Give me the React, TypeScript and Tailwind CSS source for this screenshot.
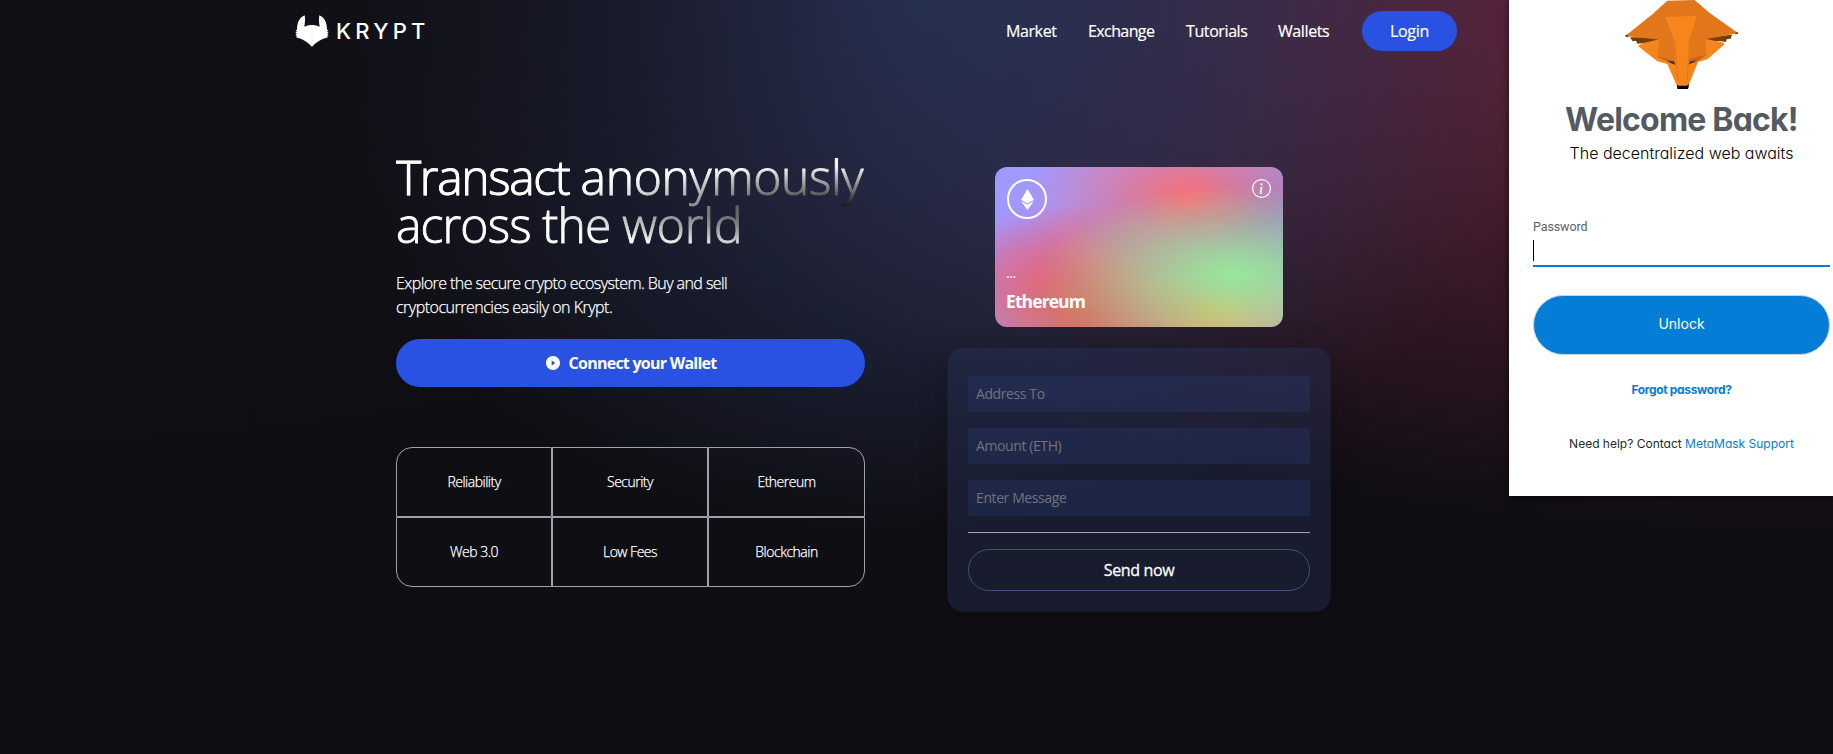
import React from "react";
import { AiFillPlayCircle } from "react-icons/ai";
import { SiEthereum } from "react-icons/si";
import { BsInfoCircle } from "react-icons/bs";

const navItems = [
  { label: "Market", style: "w-[50px] tracking-[-0.4px]" },
  { label: "Exchange", style: "w-[66px] tracking-[-0.6px]" },
  { label: "Tutorials", style: "w-[60px] tracking-[-0.4px]" },
  { label: "Wallets", style: "w-[51px] tracking-[-0.4px]" },
];

const features = [
  { label: "Reliability", corner: "rounded-tl-2xl" },
  { label: "Security", corner: "" },
  { label: "Ethereum", corner: "rounded-tr-2xl" },
  { label: "Web 3.0", corner: "rounded-bl-2xl" },
  { label: "Low Fees", corner: "" },
  { label: "Blockchain", corner: "rounded-br-2xl" },
];

const fields = ["Address To", "Amount (ETH)", "Enter Message"];

function Logo() {
  return (
    <div className="flex items-center">
      <svg width="34" height="32" viewBox="0 0 102 96" fill="#fff">
        <path d="M29 1C14 7 6 22 6 44L1 46L6 49L1 53L6 56L1 60L6 63L3 67C22 72 40 82 51 96C62 82 80 72 99 67L96 63L101 60L96 56L101 53L96 49L101 46L96 44C96 22 88 7 73 1C71 12 72 24 74 35C60 28 42 28 28 35C30 24 31 12 29 1Z" />
        <path d="M51 42V92" stroke="#d8d8de" strokeWidth="1" />
      </svg>
      <span className="ml-[7px] font-['Inter'] text-[22px] leading-8 font-medium tracking-[4.2px] text-white">KRYPT</span>
    </div>
  );
}

function Navbar() {
  return (
    <nav className="flex h-[62px] items-center justify-between pr-[376px] pl-[295px]">
      <Logo />
      <ul className="flex items-center text-base whitespace-nowrap text-white [-webkit-text-stroke:0.2px_white]">
        {navItems.map((n) => (
          <li key={n.label} className={`mr-8 ${n.style}`}>
            <span className="-ml-px">{n.label}</span>
          </li>
        ))}
        <li className="flex h-10 w-[95px] items-center justify-center rounded-full bg-[#2952e3] tracking-[-0.3px]">Login</li>
      </ul>
    </nav>
  );
}

function EthCard() {
  return (
    <div className="flex h-40 w-72 flex-col justify-between rounded-xl bg-[#a099ff] bg-[radial-gradient(at_83%_67%,rgb(152,231,156)_0,transparent_58%),radial-gradient(at_67%_20%,hsla(357,94%,71%,1)_0,transparent_59%),radial-gradient(at_88%_35%,hsla(222,81%,65%,1)_0,transparent_50%),radial-gradient(at_31%_91%,hsla(9,61%,61%,1)_0,transparent_52%),radial-gradient(at_27%_71%,hsla(336,91%,65%,1)_0,transparent_49%),radial-gradient(at_74%_89%,hsla(30,98%,65%,1)_0,transparent_51%),radial-gradient(at_53%_75%,hsla(174,94%,68%,1)_0,transparent_45%)] p-3 text-white">
      <div className="flex items-start justify-between">
        <div className="flex h-10 w-10 items-center justify-center rounded-full border-2 border-white">
          <SiEthereum size={21} />
        </div>
        <BsInfoCircle size={19} />
      </div>
      <div className="-ml-px">
        <p className="text-sm tracking-[-0.4px]">...</p>
        <p className="mt-1 text-[17.5px] leading-7 font-bold tracking-[-0.9px]">Ethereum</p>
      </div>
    </div>
  );
}

function TransferForm() {
  return (
    <div className="mt-5 flex w-full flex-col rounded-2xl border border-black/15 bg-[#273359]/40 p-5 shadow-[0_4px_30px_rgba(0,0,0,0.2)]">
      {fields.map((f) => (
        <input
          key={f}
          placeholder={f}
          className="my-2 h-9 w-full rounded-xs bg-[#2b3a76]/30 px-2 pt-[7px] pb-[9px] text-sm tracking-[-0.4px] text-white outline-none placeholder:text-[#70737f]"
        />
      ))}
      <div className="my-2 h-px bg-[#9ca3af]" />
      <button className="mt-2 h-[42px] rounded-full border border-[#3d4f7c] text-base tracking-[-0.35px] text-white [-webkit-text-stroke:0.3px_white]">Send now</button>
    </div>
  );
}

function Hero() {
  return (
    <main className="flex items-start gap-[82px] pt-[85px] pl-[396px]">
      <section className="w-[469px]">
        <h1 className="bg-white bg-[radial-gradient(at_4%_36%,#fff_0,transparent_53%),radial-gradient(at_100%_60%,#000_0,transparent_50%)] bg-clip-text pt-[6px] pb-[2px] text-[48px] leading-[48px] font-light whitespace-nowrap text-transparent [-webkit-text-stroke:0.9px_transparent]">
          <span className="tracking-[-1.35px]">Transact </span>
          <span className="tracking-[-0.35px]">anonymously</span>
          <br />
          <span className="tracking-[-0.85px]">across the </span>
          <span className="tracking-[-0.1px]">world</span>
        </h1>
        <p className="mt-5 text-base leading-6 font-light whitespace-nowrap text-white [-webkit-text-stroke:0.25px_white]">
          <span className="tracking-[-0.56px]">Explore the secure crypto ecosystem. Buy and sell</span>
          <br />
          <span className="tracking-[-0.5px]">cryptocurrencies easily on Krypt.</span>
        </p>
        <button className="mt-5 flex h-12 w-full items-center justify-center rounded-full bg-[#2952e3] text-base font-bold text-white">
          <AiFillPlayCircle size={16} className="mr-2" />
          <span className="tracking-[-0.75px]">Connect your Wallet</span>
        </button>
        <div className="mt-[60px] grid grid-cols-[156px_156px_157px]">
          {features.map((f) => (
            <div
              key={f.label}
              className={`flex h-[70px] items-center justify-center border border-[#9ca3af] text-sm font-light tracking-[-0.5px] text-white [-webkit-text-stroke:0.25px_white] ${f.corner}`}
            >
              {f.label}
            </div>
          ))}
        </div>
      </section>
      <section className="mt-5 flex w-[384px] flex-col items-center">
        <EthCard />
        <TransferForm />
      </section>
    </main>
  );
}

function Fox() {
  return (
    <svg width="160" height="100" viewBox="0 0 480 300" className="mr-[3px] block">
      <path d="M90 112L98 124L108 122L112 131L128 130L180 124L170 112ZM396 104L392 116L380 118L378 126L364 124L300 122L330 110Z" fill="#763e00" />
      <path d="M114 138L128 130L178 118L246 112L316 116L372 128L372 134L322 178L294 186L266 256L230 256L202 192L172 184Z" fill="#f6851b" />
      <path d="M178 118L226 122L226 182L172 168ZM316 116L268 122L268 180L320 164Z" fill="#e2761b" />
      <path d="M170 168L226 182L228 194L200 184ZM320 164L268 178L266 194L292 184Z" fill="#cd6116" />
      <path d="M202 184L220 184L226 195ZM290 182L272 184L266 193Z" fill="#233447" />
      <path d="M202 2L284 0L328 38L414 99L372 108L300 120L246 122L180 119L76 108L158 42Z" fill="#e2761b" />
      <path d="M76 105L84 105L86 111L76 110ZM406 98L414 97L414 102L406 103Z" fill="#763e00" />
      <path d="M197 51L291 47L268 118L266 258L231 258L222 122Z" fill="#f6851b" />
      <path d="M224 122L234 242M268 122L262 240" stroke="#e2761b" strokeWidth="3" />
      <path d="M231 254L236 257L260 257L266 252L266 261L264 267L232 267Z" fill="#000" />
    </svg>
  );
}

function WalletPopup() {
  return (
    <aside className="absolute top-0 right-0 flex h-[496px] w-[324px] flex-col items-center bg-white pr-[3px] pl-6 font-['Inter'] whitespace-nowrap text-[#24292e] shadow-[0_2px_8px_rgba(0,0,0,0.6)] [font-feature-settings:'cv11']">
      <Fox />
      <h2 className="text-[32px] leading-10 font-bold tracking-[-0.8px] text-[#535a61]">Welcome Back!</h2>
      <p className="mt-[1px] text-base leading-6 font-light text-black">The decentralized web awaits</p>
      <label className="mt-[54px] w-full font-['Roboto'] text-[12.5px] leading-4 tracking-[-0.1px] text-[#5b6067]">Password</label>
      <div className="mt-[5px] h-[27px] w-full border-b-2 border-[#037dd6]">
        <div className="h-[21px] w-px bg-black" />
      </div>
      <button className="mt-7 h-[60px] w-full rounded-full border border-[#c9d3dc] bg-[#037dd6] pb-0.5 text-sm text-white">Unlock</button>
      <a className="mt-[26px] text-xs leading-[18px] font-bold tracking-[-0.35px] text-[#037dd6]">Forgot password?</a>
      <p className="mt-9 text-xs leading-[18px]">
        Need help? Contact <span className="text-[#037dd6]">MetaMask Support</span>
      </p>
    </aside>
  );
}

export default function App() {
  return (
    <div className="relative h-[754px] w-[1833px] overflow-hidden bg-[#0f0e13] bg-[radial-gradient(at_0%_0%,hsla(253,16%,7%,1)_0,transparent_50%),radial-gradient(at_50%_0%,hsla(225,39%,30%,1)_0,transparent_50%),radial-gradient(at_100%_0%,hsla(339,49%,30%,1)_0,transparent_50%)] font-['Open_Sans',sans-serif]">
      <Navbar />
      <Hero />
      <WalletPopup />
    </div>
  );
}
